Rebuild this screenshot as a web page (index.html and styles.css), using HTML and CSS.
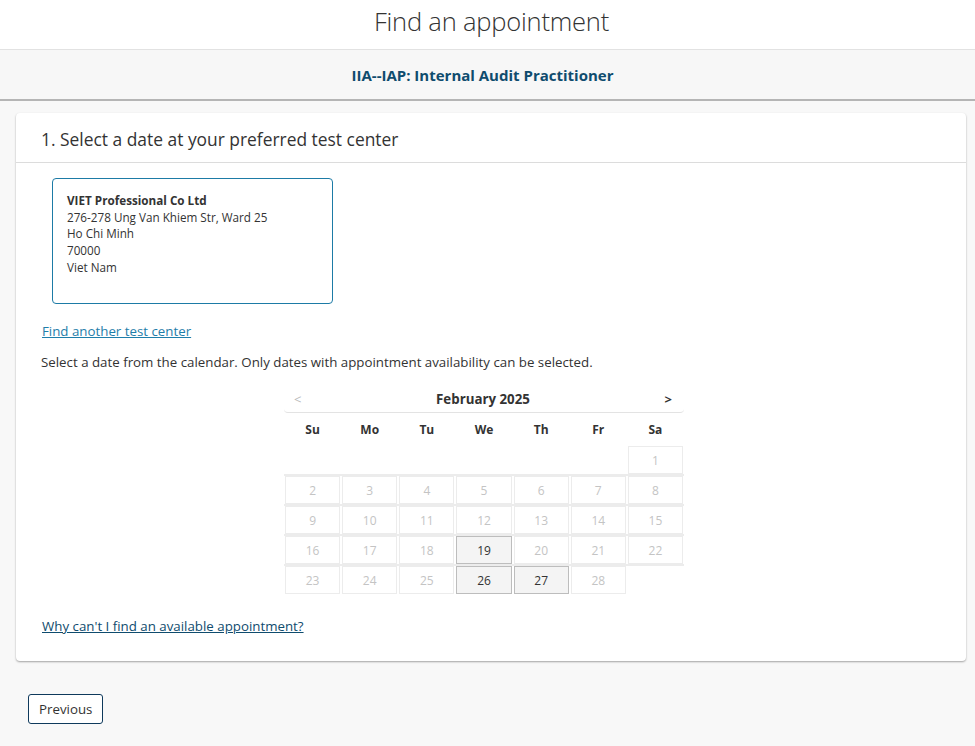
FILE: index.html
```html
<!DOCTYPE html>
<html lang="en">
<head>
<meta charset="utf-8">
<title>Find an appointment</title>
<link rel="stylesheet" href="styles.css">
</head>
<body>
<header class="top">
  <h1 class="title">Find an appointment</h1>
</header>
<div class="exam-bar">IIA--IAP: Internal Audit Practitioner</div>
<main class="main">
  <section class="card">
    <h2 class="card-head">1. Select a date at your preferred test center</h2>
    <div class="card-body">
      <div class="center-box">
        <div class="center-name">VIET Professional Co Ltd</div>
        <div>276-278 Ung Van Khiem Str, Ward 25</div>
        <div>Ho Chi Minh</div>
        <div>70000</div>
        <div>Viet Nam</div>
      </div>
      <a class="link-teal" href="#">Find another test center</a>
      <p class="hint">Select a date from the calendar. Only dates with appointment availability can be selected.</p>
      <div class="calendar">
        <div class="cal-head">
          <span class="nav prev">&lt;</span>
          <span class="month">February 2025</span>
          <span class="nav next">&gt;</span>
        </div>
        <div class="cal-row dow">
          <span>Su</span><span>Mo</span><span>Tu</span><span>We</span><span>Th</span><span>Fr</span><span>Sa</span>
        </div>
        <div class="cal-row week">
          <span class="empty"></span><span class="empty"></span><span class="empty"></span><span class="empty"></span><span class="empty"></span><span class="empty"></span><span class="day">1</span>
        </div>
        <div class="cal-row week sep">
          <span class="day">2</span><span class="day">3</span><span class="day">4</span><span class="day">5</span><span class="day">6</span><span class="day">7</span><span class="day">8</span>
        </div>
        <div class="cal-row week sep">
          <span class="day">9</span><span class="day">10</span><span class="day">11</span><span class="day">12</span><span class="day">13</span><span class="day">14</span><span class="day">15</span>
        </div>
        <div class="cal-row week sep">
          <span class="day">16</span><span class="day">17</span><span class="day">18</span><span class="day avail">19</span><span class="day">20</span><span class="day">21</span><span class="day">22</span>
        </div>
        <div class="cal-row week sep">
          <span class="day">23</span><span class="day">24</span><span class="day">25</span><span class="day avail">26</span><span class="day avail">27</span><span class="day">28</span><span class="empty"></span>
        </div>
      </div>
      <a class="link-dark" href="#">Why can't I find an available appointment?</a>
    </div>
  </section>
  <div class="actions">
    <button class="btn" type="button">Previous</button>
  </div>
</main>
</body>
</html>
```
FILE: styles.css
```css
* { box-sizing: border-box; }
html, body { margin: 0; padding: 0; }
body {
  background: #f8f8f8;
  font-family: "Open Sans", "Liberation Sans", sans-serif;
  color: #333;
  font-size: 13.3px;
}
.top {
  background: #fff;
  height: 50px;
  border-bottom: 1px solid #e2e2e2;
  display: flex;
  justify-content: center;
  align-items: center;
}
.title {
  margin: 0;
  font-size: 25.5px;
  font-weight: 300;
  color: #333;
  letter-spacing: -0.2px;
  padding-bottom: 8px;
  padding-left: 8px;
}
.exam-bar {
  height: 51px;
  background: #f7f7f7;
  border-bottom: 2px solid #b5b5b5;
  display: flex;
  justify-content: center;
  align-items: center;
  font-size: 15px;
  font-weight: 700;
  color: #0f4c6e;
  padding-right: 10px;
}
.main { padding: 12px 9px 0 16px; }
.card {
  background: #fff;
  border-radius: 4px;
  box-shadow: 0 1px 2px rgba(0,0,0,0.35);
}
.card-head {
  margin: 0;
  padding: 14px 25px 11px;
  font-size: 17.4px;
  font-weight: 400;
  color: #333;
  border-bottom: 1px solid #dcdcdc;
}
.card-body { padding: 15px 25px 26px; }
.center-box {
  width: 281px;
  height: 126px;
  margin-left: 11px;
  border: 1.5px solid #1d7ba6;
  border-radius: 4px;
  padding: 13px 14px;
  font-size: 11.7px;
  line-height: 16.7px;
}
.center-name { font-weight: 700; }
.link-teal {
  display: inline-block;
  margin: 18px 0 0 1px;
  color: #1f7eaa;
}
.hint { margin: 12px 0 0; line-height: 20px; }
.calendar {
  width: 400px;
  margin: 13px 0 0 calc(50% - 207px);
}
.cal-head {
  height: 28px;
  display: flex;
  align-items: center;
  justify-content: space-between;
  padding: 0 12px 0 10px;
  border-bottom: 1px solid #e3e3e3;
  border-radius: 0 0 4px 4px;
}
.month { font-weight: 700; color: #333; }
.nav { font-size: 13px; font-weight: 700; }
.prev { color: #bbb; font-weight: 400; }
.next { color: #333; }
.cal-row {
  display: grid;
  grid-template-columns: repeat(7, 1fr);
}
.dow span {
  text-align: center;
  font-weight: 700;
  font-size: 12px;
  height: 33px;
  line-height: 33px;
}
.week.sep { border-top: 2px solid #ececec; }
.week span {
  height: 28px;
  margin: 0 1px;
  display: flex;
  align-items: center;
  justify-content: center;
  font-size: 12px;
}
.week .day {
  border: 1px solid #ececec;
  color: #c4c4c4;
}
.week .day.avail {
  background: #f4f4f4;
  border-color: #bdbdbd;
  color: #333;
}
.link-dark {
  display: inline-block;
  margin: 23px 0 0 1px;
  color: #0f4c6e;
}
.actions { padding: 33px 0 20px 12px; }
.btn {
  font-family: inherit;
  font-size: 13.3px;
  color: #333;
  background: #fff;
  border: 1px solid #0f3a5c;
  border-radius: 3px;
  height: 30px;
  padding: 0 10px;
}
```
